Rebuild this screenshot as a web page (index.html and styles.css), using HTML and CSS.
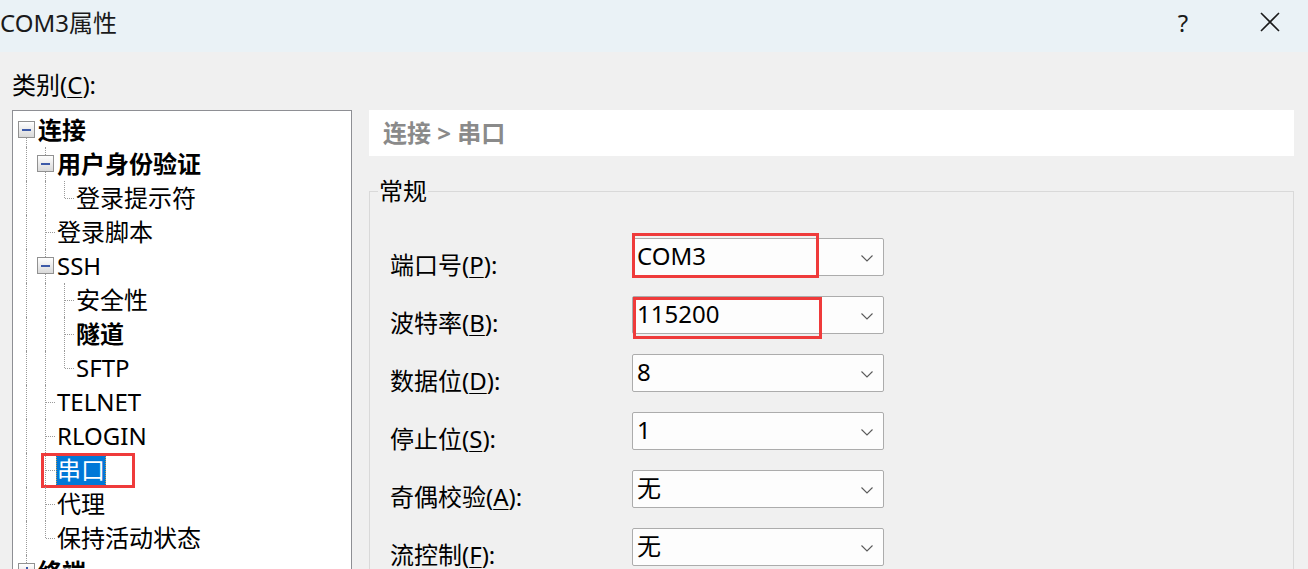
FILE: index.html
```html
<!DOCTYPE html>
<html lang="zh">
<head>
<meta charset="utf-8">
<title>COM3属性</title>
<link rel="stylesheet" href="styles.css">
</head>
<body>
<div class="titlebar">
  <div class="title">COM3属性</div>
  <div class="help">?</div>
  <svg class="close" width="20" height="20" viewBox="0 0 20 20"><path d="M1 1 L19 19 M19 1 L1 19" stroke="#1a1a1a" stroke-width="1.6" fill="none"/></svg>
</div>
<div class="main">
  <div class="left">
    <div class="cat-label">类别(<u>C</u>):</div>
    <div class="tree">
      <div class="row">
        <div class="g x"><span class="up none"></span><span class="bx"><span class="minus"></span></span><span class="dn"></span></div>
        <span class="t bold">连接</span>
      </div>
      <div class="row">
        <div class="g v"><span class="vl"></span></div>
        <div class="g x"><span class="up"></span><span class="bx"><span class="minus"></span></span><span class="dn"></span></div>
        <span class="t bold">用户身份验证</span>
      </div>
      <div class="row">
        <div class="g v"><span class="vl"></span></div>
        <div class="g v"><span class="vl"></span></div>
        <div class="g l"><span class="vl"></span><span class="hl"></span></div>
        <span class="t">登录提示符</span>
      </div>
      <div class="row">
        <div class="g v"><span class="vl"></span></div>
        <div class="g t-cell"><span class="vl"></span><span class="hl"></span></div>
        <span class="t">登录脚本</span>
      </div>
      <div class="row">
        <div class="g v"><span class="vl"></span></div>
        <div class="g x"><span class="up"></span><span class="bx"><span class="minus"></span></span><span class="dn"></span></div>
        <span class="t">SSH</span>
      </div>
      <div class="row">
        <div class="g v"><span class="vl"></span></div>
        <div class="g v"><span class="vl"></span></div>
        <div class="g t-cell"><span class="vl"></span><span class="hl"></span></div>
        <span class="t">安全性</span>
      </div>
      <div class="row">
        <div class="g v"><span class="vl"></span></div>
        <div class="g v"><span class="vl"></span></div>
        <div class="g t-cell"><span class="vl"></span><span class="hl"></span></div>
        <span class="t bold">隧道</span>
      </div>
      <div class="row">
        <div class="g v"><span class="vl"></span></div>
        <div class="g v"><span class="vl"></span></div>
        <div class="g l"><span class="vl"></span><span class="hl"></span></div>
        <span class="t">SFTP</span>
      </div>
      <div class="row">
        <div class="g v"><span class="vl"></span></div>
        <div class="g t-cell"><span class="vl"></span><span class="hl"></span></div>
        <span class="t">TELNET</span>
      </div>
      <div class="row">
        <div class="g v"><span class="vl"></span></div>
        <div class="g t-cell"><span class="vl"></span><span class="hl"></span></div>
        <span class="t">RLOGIN</span>
      </div>
      <div class="row">
        <div class="g v"><span class="vl"></span></div>
        <div class="g t-cell"><span class="vl"></span><span class="hl"></span></div>
        <span class="t selected">串口</span>
        <span class="mark mark-tree"></span>
      </div>
      <div class="row">
        <div class="g v"><span class="vl"></span></div>
        <div class="g t-cell"><span class="vl"></span><span class="hl"></span></div>
        <span class="t">代理</span>
      </div>
      <div class="row">
        <div class="g v"><span class="vl"></span></div>
        <div class="g l"><span class="vl"></span><span class="hl"></span></div>
        <span class="t">保持活动状态</span>
      </div>
      <div class="row">
        <div class="g x"><span class="up"></span><span class="bx"><span class="minus"></span><span class="plus"></span></span></div>
        <span class="t bold">终端</span>
      </div>
    </div>
  </div>
  <div class="right">
    <div class="crumb">连接 &gt; 串口</div>
    <div class="group">
      <div class="gtitle">常规</div>
      <div class="fields">
        <div class="field">
          <div class="flabel">端口号(<u>P</u>):</div>
          <div class="combo"><span class="val">COM3</span><svg class="chev" width="12" height="7" viewBox="0 0 12 7"><polyline points="0.5,0.5 6,6 11.5,0.5" fill="none" stroke="#5a5a5a" stroke-width="1.1"/></svg><span class="mark mark-port"></span></div>
        </div>
        <div class="field">
          <div class="flabel">波特率(<u>B</u>):</div>
          <div class="combo"><span class="val">115200</span><svg class="chev" width="12" height="7" viewBox="0 0 12 7"><polyline points="0.5,0.5 6,6 11.5,0.5" fill="none" stroke="#5a5a5a" stroke-width="1.1"/></svg><span class="mark mark-baud"></span></div>
        </div>
        <div class="field">
          <div class="flabel">数据位(<u>D</u>):</div>
          <div class="combo"><span class="val">8</span><svg class="chev" width="12" height="7" viewBox="0 0 12 7"><polyline points="0.5,0.5 6,6 11.5,0.5" fill="none" stroke="#5a5a5a" stroke-width="1.1"/></svg></div>
        </div>
        <div class="field">
          <div class="flabel">停止位(<u>S</u>):</div>
          <div class="combo"><span class="val">1</span><svg class="chev" width="12" height="7" viewBox="0 0 12 7"><polyline points="0.5,0.5 6,6 11.5,0.5" fill="none" stroke="#5a5a5a" stroke-width="1.1"/></svg></div>
        </div>
        <div class="field">
          <div class="flabel">奇偶校验(<u>A</u>):</div>
          <div class="combo"><span class="val">无</span><svg class="chev" width="12" height="7" viewBox="0 0 12 7"><polyline points="0.5,0.5 6,6 11.5,0.5" fill="none" stroke="#5a5a5a" stroke-width="1.1"/></svg></div>
        </div>
        <div class="field">
          <div class="flabel">流控制(<u>F</u>):</div>
          <div class="combo"><span class="val">无</span><svg class="chev" width="12" height="7" viewBox="0 0 12 7"><polyline points="0.5,0.5 6,6 11.5,0.5" fill="none" stroke="#5a5a5a" stroke-width="1.1"/></svg></div>
        </div>
      </div>
    </div>
  </div>
</div>
</body>
</html>
```

FILE: styles.css
```css
html, body {
  margin: 0;
  padding: 0;
  height: 569px;
  overflow: hidden;
}
body {
  background: #f0f0f0;
  font-family: "Noto Sans", "Noto Sans CJK SC", sans-serif;
  font-size: 24px;
  color: #000;
}
u { text-decoration-thickness: 1px; text-underline-offset: 3px; }

.titlebar {
  height: 52px;
  background: #eaf2f6;
  display: flex;
  align-items: center;
  padding-right: 28px;
}
.title {
  flex: 1;
  line-height: 30px;
  margin-top: -6px;
  color: #1a1a1a;
}
.help {
  width: 16px;
  text-align: center;
  margin-right: 69px;
  margin-top: -8px;
  color: #1a1a1a;
}
.close { display: block; margin-top: -8px; }

.main {
  display: flex;
  align-items: flex-start;
}
.left {
  width: 340px;
  padding-left: 12px;
  flex: none;
}
.cat-label {
  margin-top: 16px;
  line-height: 34px;
  margin-bottom: 8px;
}
.tree {
  width: 340px;
  height: 470px;
  box-sizing: border-box;
  border: 1px solid #8e8f94;
  border-bottom: none;
  background: #fff;
  padding: 2px 0 0 4px;
  overflow: hidden;
}
.row {
  display: flex;
  align-items: flex-start;
  height: 34px;
  position: relative;
}
.g {
  width: 19px;
  height: 34px;
  flex: none;
  display: flex;
  align-items: flex-start;
}
.g .vl {
  width: 9px;
  height: 34px;
  border-right: 1px dotted #9a9a9a;
  flex: none;
}
.g.l .vl { height: 17px; }
.g .hl {
  flex: 1;
  height: 17px;
  border-bottom: 1px dotted #9a9a9a;
}
.g.x {
  flex-direction: column;
}
.g.x .up {
  width: 9px;
  height: 8px;
  border-right: 1px dotted #9a9a9a;
}
.g.x .up.none { border-right-color: transparent; }
.g.x .dn {
  width: 9px;
  flex: 1;
  border-right: 1px dotted #9a9a9a;
}
.bx {
  width: 17px;
  height: 17px;
  box-sizing: border-box;
  margin-left: 1px;
  border: 1px solid #919191;
  background: linear-gradient(#ffffff, #d9d9d9);
  display: flex;
  align-items: center;
  justify-content: center;
  position: relative;
}
.minus {
  width: 9px;
  height: 2px;
  background: #3d5aa8;
}
.plus {
  position: absolute;
  width: 2px;
  height: 9px;
  background: #3d5aa8;
}
.t {
  line-height: 33px;
  height: 33px;
  padding: 0 1px;
  margin-left: 1px;
  white-space: nowrap;
  box-sizing: border-box;
}
.bold { font-weight: bold; }
.selected {
  background: #0078d7;
  color: #fff;
  outline: 1px dotted #c89a50;
  outline-offset: -1px;
}
.mark {
  position: absolute;
  border: 3px solid #ef3b3b;
  box-sizing: border-box;
  pointer-events: none;
}
.mark-tree {
  left: 24px;
  top: 0;
  width: 94px;
  height: 35px;
}

.right {
  width: 925px;
  margin-left: 17px;
  padding-top: 58px;
  flex: none;
}
.crumb {
  height: 46px;
  line-height: 46px;
  background: #fff;
  padding-left: 14px;
  font-weight: bold;
  color: #8a8a8a;
}
.group {
  margin-top: 35px;
  border: 1px solid #d9d9d9;
  border-bottom: none;
  height: 400px;
}
.gtitle {
  display: block;
  width: fit-content;
  margin: -18px 0 0 8px;
  padding: 0 1px;
  line-height: 34px;
  height: 34px;
  background: #f0f0f0;
}
.fields {
  margin-top: 30px;
  padding-left: 20px;
  display: flex;
  flex-direction: column;
  gap: 20px;
}
.field {
  display: flex;
  align-items: flex-start;
  height: 38px;
}
.flabel {
  width: 242px;
  margin-top: 10px;
  line-height: 34px;
  flex: none;
}
.combo {
  width: 252px;
  height: 38px;
  box-sizing: border-box;
  border: 1px solid #acacac;
  border-radius: 2px;
  background: #fdfdfd;
  display: flex;
  align-items: center;
  padding: 0 10px 0 4px;
  position: relative;
  flex: none;
}
.val {
  flex: 1;
  line-height: 36px;
  margin-top: -2px;
}
.chev { display: block; margin-top: 3px; }
.mark-port {
  left: -1px;
  top: -6px;
  width: 187px;
  height: 45px;
}
.mark-baud {
  left: 0;
  top: 0;
  width: 189px;
  height: 42px;
}
```
